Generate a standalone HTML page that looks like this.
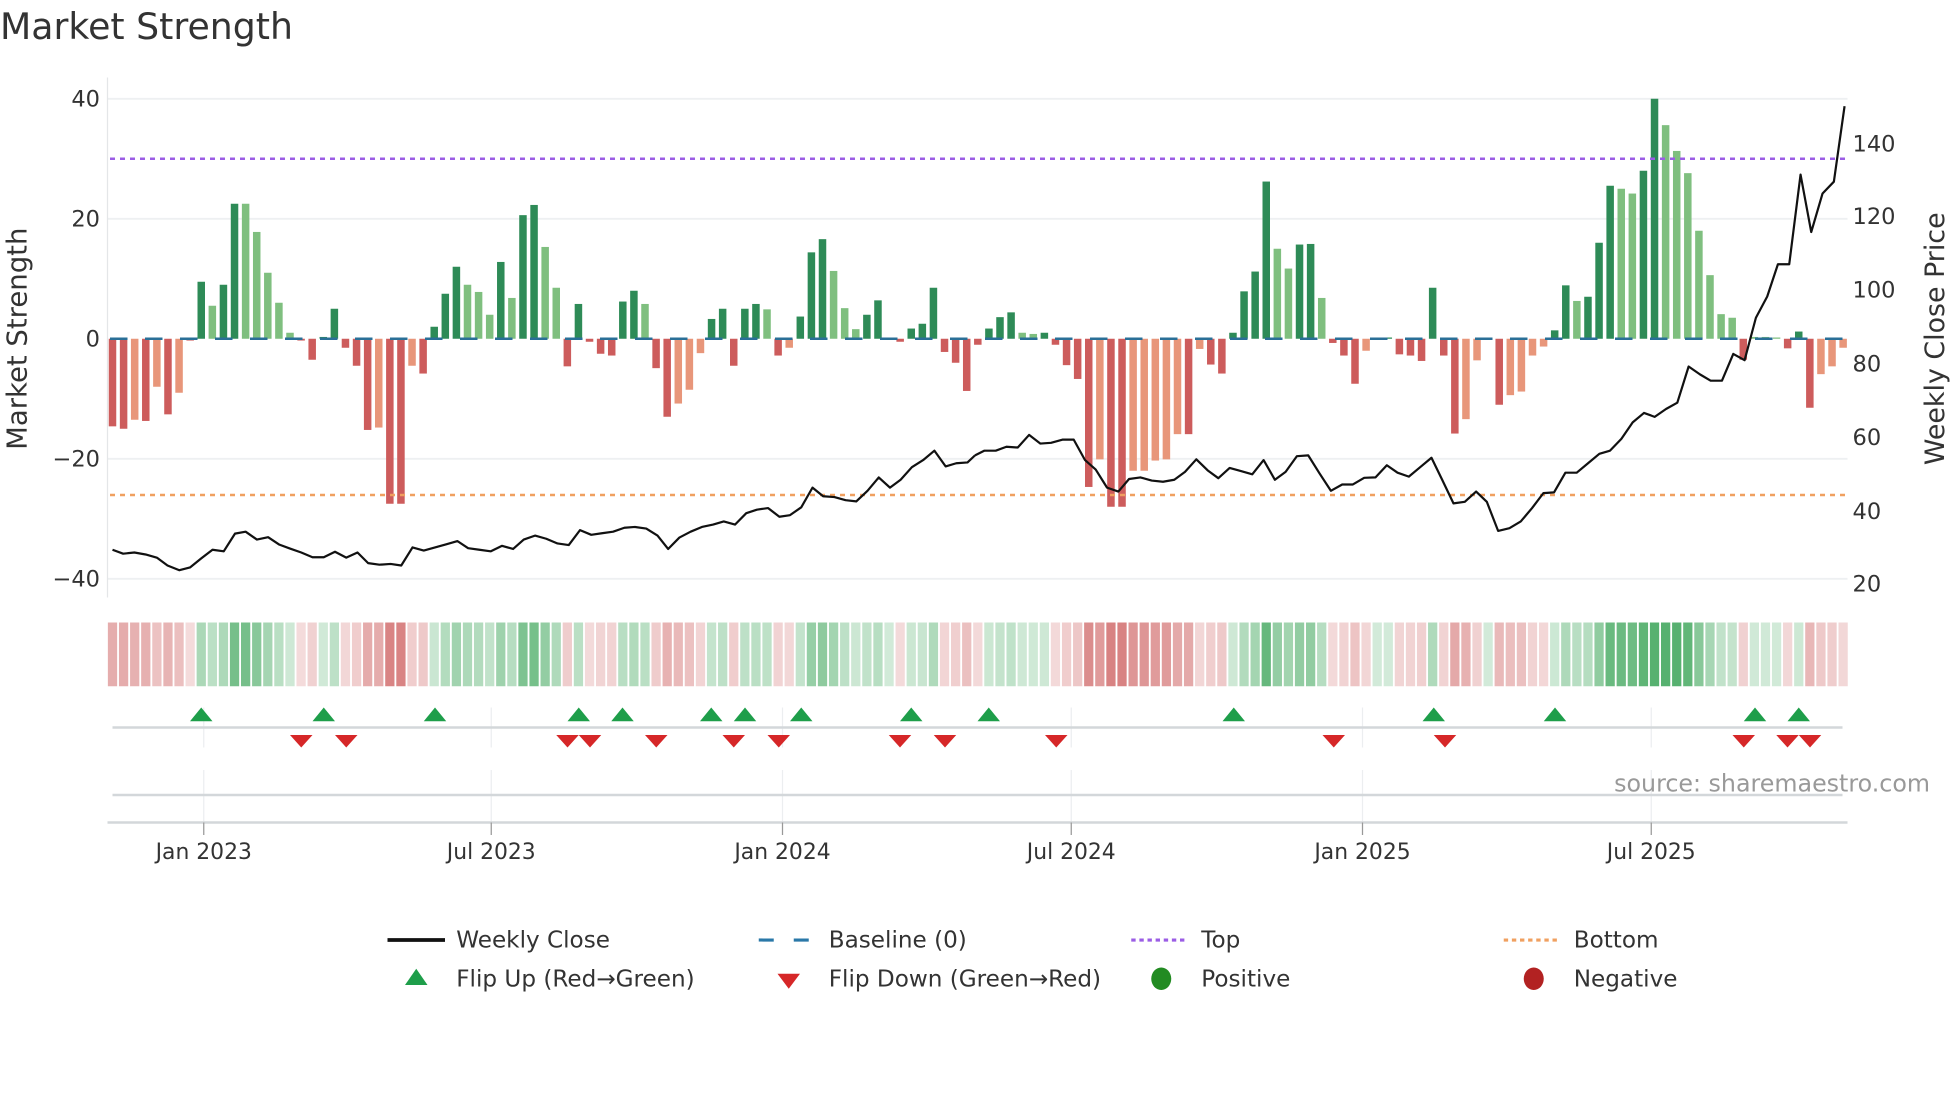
<!DOCTYPE html>
<html><head><meta charset="utf-8"><style>
html,body{margin:0;padding:0;background:#fff;}
svg{display:block;font-family:"DejaVu Sans","Liberation Sans",sans-serif;}
</style></head><body>
<svg id="s" width="1960" height="1102" viewBox="0 0 1568 881.6" xmlns="http://www.w3.org/2000/svg">
<text x="0" y="31" font-size="29" fill="#333">Market Strength</text>
<g stroke="#eef0f2" stroke-width="1.5">
<line x1="86" y1="79" x2="1478" y2="79"/><line x1="86" y1="175" x2="1478" y2="175"/>
<line x1="86" y1="367" x2="1478" y2="367"/><line x1="86" y1="463" x2="1478" y2="463"/>
</g>
<line x1="86" y1="62" x2="86" y2="478" stroke="#e4e6e8" stroke-width="1"/>
<g id="bars"></g>
<line x1="88" y1="271" x2="1478" y2="271" stroke="#2a6f97" stroke-width="2" stroke-dasharray="14,14"/>
<line x1="88" y1="127" x2="1476" y2="127" stroke="#9b5de5" stroke-width="2" stroke-dasharray="4,4"/>
<line x1="88" y1="396" x2="1476" y2="396" stroke="#f0a060" stroke-width="2" stroke-dasharray="4,4"/>
<g transform="matrix(0.5 0 0 0.3146 0 0)" fill="none" stroke="#111" stroke-width="2.2" stroke-linejoin="round">
<polyline vector-effect="non-scaling-stroke" points="180,1398 197,1408 215,1405 233,1410 251,1418 268,1438 287,1450 304,1443 322,1420 340,1398 358,1402 376,1357 393,1352 411,1372 429,1366 447,1385 464,1395 482,1405 500,1417 518,1417 536,1403 554,1418 572,1405 589,1432 607,1436 625,1434 642,1438 660,1392 678,1400 696,1392 714,1384 732,1376 749,1394 767,1398 785,1402 803,1388 821,1396 838,1372 856,1362 874,1370 892,1382 910,1386 928,1348 946,1360 963,1356 981,1352 999,1342 1016,1340 1034,1344 1052,1362 1069,1396 1087,1367 1105,1352 1123,1340 1141,1334 1158,1326 1176,1334 1194,1305 1211,1296 1229,1292 1247,1314 1264,1310 1282,1290 1300,1240 1317,1262 1335,1264 1353,1272 1370,1275 1388,1248 1406,1214 1424,1240 1441,1220 1459,1188 1477,1170 1495,1146 1513,1186 1530,1178 1548,1176 1560,1158"/>
</g>
<g transform="matrix(0.503 0 0 0.3146 780 0)" fill="none" stroke="#111" stroke-width="2.2" stroke-linejoin="round">
<polyline vector-effect="non-scaling-stroke" points="0,1158 15,1146 33,1146 50,1136 68,1138 86,1106 104,1128 121,1126 139,1118 157,1118 175,1170 192,1194 210,1240 228,1250 245,1218 263,1214 281,1222 299,1225 317,1220 334,1200 352,1168 370,1196 387,1216 405,1190 423,1198 441,1206 459,1170 477,1220 494,1200 512,1160 530,1158 548,1204 566,1248 584,1232 601,1232 619,1215 637,1214 655,1183 672,1202 690,1212 708,1188 726,1164 743,1220 761,1280 779,1276 797,1250 814,1276 832,1350 850,1343 868,1326 886,1292 904,1254 921,1252 939,1202 957,1202 975,1178 993,1154 1010,1146 1028,1116 1046,1074 1064,1050 1081,1060 1099,1040 1117,1024 1135,932 1153,952 1170,968 1188,968 1206,900 1224,916 1242,808 1260,754 1277,672 1295,672 1313,444 1330,590 1348,492 1366,462 1383,270"/>
</g>
<g font-size="18" fill="#333" text-anchor="end">
<text x="80" y="85">40</text><text x="80" y="181">20</text><text x="80" y="277">0</text>
<text x="80" y="373">−20</text><text x="80" y="469">−40</text>
</g>
<text transform="translate(21,271) rotate(-90)" font-size="22" fill="#333" text-anchor="middle">Market Strength</text>
<g font-size="18" fill="#333">
<text x="1482" y="121">140</text><text x="1482" y="179">120</text><text x="1482" y="238">100</text>
<text x="1482" y="297">80</text><text x="1482" y="356">60</text><text x="1482" y="415">40</text><text x="1482" y="473">20</text>
</g>
<text transform="translate(1555,271) rotate(-90)" font-size="21.5" fill="#333" text-anchor="middle">Weekly Close Price</text>
<g id="heat"></g>
<g stroke="#eceef0" stroke-width="1">
<line x1="163" y1="566" x2="163" y2="598"/><line x1="393" y1="566" x2="393" y2="598"/><line x1="626" y1="566" x2="626" y2="598"/><line x1="857" y1="566" x2="857" y2="598"/><line x1="1090" y1="566" x2="1090" y2="598"/><line x1="1321" y1="566" x2="1321" y2="598"/>
<line x1="163" y1="616" x2="163" y2="658"/><line x1="393" y1="616" x2="393" y2="658"/><line x1="626" y1="616" x2="626" y2="658"/><line x1="857" y1="616" x2="857" y2="658"/><line x1="1090" y1="616" x2="1090" y2="658"/><line x1="1321" y1="616" x2="1321" y2="658"/>
</g>
<line x1="90" y1="582" x2="1474" y2="582" stroke="#d3d7da" stroke-width="2"/>
<line x1="90" y1="636" x2="1474" y2="636" stroke="#d3d7da" stroke-width="2"/>
<line x1="86" y1="658" x2="1478" y2="658" stroke="#d3d7da" stroke-width="2"/>
<g id="marks"></g>
<g stroke="#999" stroke-width="1"><line x1="163" y1="658" x2="163" y2="668"/><line x1="393" y1="658" x2="393" y2="668"/><line x1="626" y1="658" x2="626" y2="668"/><line x1="857" y1="658" x2="857" y2="668"/><line x1="1090" y1="658" x2="1090" y2="668"/><line x1="1321" y1="658" x2="1321" y2="668"/></g>
<g font-size="17.5" fill="#333" text-anchor="middle">
<text x="163" y="687">Jan 2023</text><text x="393" y="687">Jul 2023</text><text x="626" y="687">Jan 2024</text><text x="857" y="687">Jul 2024</text><text x="1090" y="687">Jan 2025</text><text x="1321" y="687">Jul 2025</text>
</g>
<text x="1544" y="633" font-size="19" fill="#999" text-anchor="end">source: sharemaestro.com</text>
<g font-size="18.5" fill="#333">
<line x1="310" y1="752" x2="356" y2="752" stroke="#111" stroke-width="3"/>
<text x="365" y="758">Weekly Close</text>
<line x1="607" y1="752" x2="651" y2="752" stroke="#2a78a8" stroke-width="2.5" stroke-dasharray="12,16"/>
<text x="663" y="758">Baseline (0)</text>
<line x1="905" y1="752" x2="950" y2="752" stroke="#9b5de5" stroke-width="2.5" stroke-dasharray="3.5,3"/>
<text x="961" y="758">Top</text>
<line x1="1203" y1="752" x2="1248" y2="752" stroke="#f0a060" stroke-width="2.5" stroke-dasharray="3.5,3"/>
<text x="1259" y="758">Bottom</text>
<polygon points="324,788 342,788 333,775" fill="#1e9e4a"/>
<text x="365" y="789">Flip Up (Red→Green)</text>
<polygon points="622,779 640,779 631,791" fill="#d62728"/>
<text x="663" y="789">Flip Down (Green→Red)</text>
<ellipse cx="929" cy="783" rx="8" ry="9" fill="#228b22"/>
<text x="961" y="789">Positive</text>
<ellipse cx="1227" cy="783" rx="8" ry="9" fill="#b22222"/>
<text x="1259" y="789">Negative</text>
</g>
</svg>
<script>
var a=["-14.6","-15","-13.5l","-13.7","-8l","-12.6","-9l","-0.3","9.5","5.5l","9","22.5","22.5l","17.8l","11l","6l","1l","-0.3","-3.5","0.3","5","-1.5","-4.5","-15.2","-14.8l","-27.5","-27.5","-4.5l","-5.8","2","7.5","12","9l","7.8l","4l","12.8","6.8l","20.6","22.3","15.3l","8.5l","-4.6","5.8","-0.5","-2.5","-2.8","6.2","8","5.8l","-4.9","-13","-10.8l","-8.5l","-2.4l","3.3","5","-4.5","5","5.8","4.9l","-2.8","-1.5l","3.7","14.4","16.6","11.3l","5.1l","1.6l","4","6.4","0.2l","-0.5","1.7","2.5","8.5","-2.2","-4","-8.7"];
var b=["-1","1.7","3.6","4.4","1l","0.8l","1","-1","-4.4","-6.7","-24.7","-20.1l","-28","-28","-22l","-22l","-20.3l","-20.1l","-15.9l","-15.9","-1.7l","-4.3","-5.8","1","7.9","11.2","26.2","15l","11.7l","15.7","15.8","6.8l","-0.7","-2.8","-7.5","-2l","0","0","-2.6","-2.8","-3.7","8.5","-2.8","-15.8","-13.4l","-3.6l","0","-11","-9.4l","-8.8l","-2.8l","-1.3l","1.4","8.9","6.3l","7","16","25.5","25l","24.2l","28","40","35.6l","31.3l","27.6l","18l","10.6l","4.1l","3.5l","-3.5","0.3l","0.3l","0.2l","-1.6","1.2","-11.5","-5.9l","-4.6l","-1.5l"];
var NS="http://www.w3.org/2000/svg";
function el(t,at,p){var e=document.createElementNS(NS,t);for(var k in at)e.setAttribute(k,at[k]);p.appendChild(e);return e;}
var bars=document.getElementById("bars"),heat=document.getElementById("heat"),marks=document.getElementById("marks");
var all=a.concat(b);
all.forEach(function(s,i){
 var x=90+i*8.875,v=parseFloat(s),L=s.indexOf("l")>=0;
 var h=Math.abs(v)*4.8; if(h<1)h=1;
 var c=v>=0?(L?"#7fbf7f":"#2e8b57"):(L?"#e8967a":"#cd5c5c");
 el("rect",{x:x-3,y:v>=0?271-h:271,width:6,height:h,fill:c},bars);
 var m=Math.min(Math.abs(v)/30,1);
 var col=v>=0?"rgba(50,160,80,"+(0.22+0.6*m)+")":"rgba(205,95,95,"+(0.22+0.6*m)+")";
 el("rect",{x:x-3.7,y:498,width:7.4,height:51,fill:col},heat);
});
[161,259,348,463,498,569,596,641,729,791,987,1147,1244,1404,1439].forEach(function(x){
 el("polygon",{points:(x-9)+",577 "+(x+9)+",577 "+x+",566",fill:"#1e9e4a"},marks);});
[241,277,454,472,525,587,623,720,756,845,1067,1156,1395,1430,1448].forEach(function(x){
 el("polygon",{points:(x-9)+",588 "+(x+9)+",588 "+x+",598",fill:"#d62728"},marks);});
</script>
</body></html>
